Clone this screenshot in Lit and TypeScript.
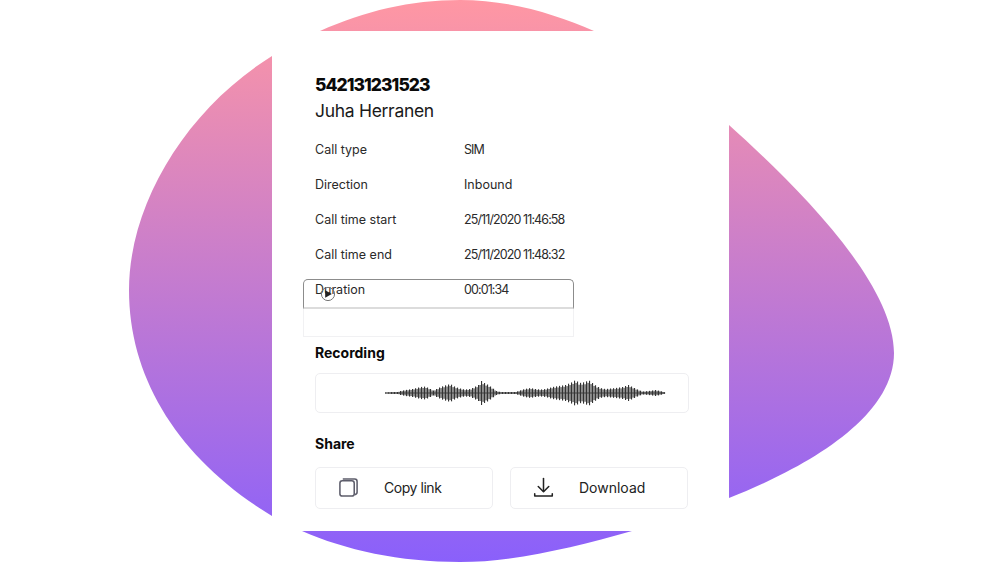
import { LitElement, html, css, svg } from "lit";
import { customElement } from "lit/decorators.js";

const ENV: [number, number][] = [
  [385,.5],[392,1],[397,1],[400,2],[405,3],[412,4],[420,6],[425,6.5],[430,4],[433,2.5],[436,4],[440,6],[446,8],[450,9],[453,7],[458,5],[464,3.5],[470,4],[474,6],[478,8],[481,12],[484,10],[488,8],[492,5],[496,2],[500,1],[515,1],[518,2],[524,4],[530,5],[535,4],[540,3.5],[545,4],[552,6],[558,7],[565,8],[572,11],[575,13],[579,10],[585,11],[588,13],[592,10],[596,7],[600,5],[605,4],[615,5],[622,6],[628,8],[632,6],[636,4],[642,1.5],[648,2],[655,3],[660,2],[665,.5],
];

function amp(x: number): number {
  for (let i = 1; i < ENV.length; i++) {
    const [x0, a0] = ENV[i - 1];
    const [x1, a1] = ENV[i];
    if (x <= x1) return a0 + ((a1 - a0) * (x - x0)) / (x1 - x0);
  }
  return 0.5;
}

const bars = () => {
  const out = [svg`<rect x="0" y="13.5" width="280" height="1" fill="#555"></rect>`];
  for (let x = 385; x <= 665; x += 1.5) {
    const a = amp(x) * (Math.round(x * 2) % 6 === 2 ? 1 : 0.8);
    out.push(svg`<rect x=${x - 385} y=${14 - a} width="1.1" height=${2 * a} fill="#333"></rect>`);
  }
  return out;
};

const ROWS: [string, string, string][] = [
  ["Call type", "SIM", "sim"],
  ["Direction", "Inbound", ""],
  ["Call time start", "25/11/2020 11:46:58", "num"],
  ["Call time end", "25/11/2020 11:48:32", "num"],
  ["Duration", "00:01:34", "num"],
];

@customElement("app-root")
export class AppRoot extends LitElement {
  static styles = css`
    :host {
      display: block;
      width: 1000px;
      height: 562px;
      font-family: Inter, "Liberation Sans", sans-serif;
      color: #1a1a1a;
      background: #fff;
    }
    .stage {
      position: relative;
      width: 1000px;
      height: 562px;
      overflow: hidden;
      padding: 31px 0 0 272px;
      box-sizing: border-box;
    }
    .blob {
      position: absolute;
      left: 0;
      top: 0;
    }
    .card {
      position: relative;
      box-sizing: border-box;
      width: 457px;
      height: 500px;
      background: #fff;
      padding: 43px 41px 0 43px;
      display: flex;
      flex-direction: column;
    }
    .number {
      font-size: 17.5px;
      font-weight: 800;
      line-height: 22px;
      letter-spacing: -0.95px;
      color: #0a0a0a;
    }
    .name {
      font-size: 17.5px;
      line-height: 24px;
      margin-top: 3px;
      letter-spacing: -0.3px;
    }
    .rows {
      margin-top: 18px;
      display: flex;
      flex-direction: column;
    }
    .row {
      position: relative;
      display: grid;
      grid-template-columns: 149px 1fr;
      height: 35px;
      font-size: 12.5px;
      line-height: 18px;
      color: #2a2a2a;
    }
    .num {
      letter-spacing: -0.9px;
    }
    .sim {
      letter-spacing: -0.9px;
    }
    .player {
      position: absolute;
      left: -12px;
      top: -2px;
      width: 271px;
      height: 58px;
      box-sizing: border-box;
    }
    .player-top {
      box-sizing: border-box;
      height: 30px;
      border: 1px solid #8c8c8c;
      border-bottom: 2px solid #dcdcdc;
      border-radius: 5px 5px 0 0;
    }
    .player-bottom {
      box-sizing: border-box;
      height: 28px;
      border: 1px solid #f1f1f3;
      border-top: 0;
    }
    .play {
      position: absolute;
      left: 17px;
      top: 7px;
    }
    h2 {
      margin: 0;
      font-size: 14px;
      font-weight: 700;
      line-height: 18px;
      color: #0a0a0a;
    }
    .recording {
      margin-top: 28px;
    }
    .wave {
      margin-top: 11px;
      box-sizing: border-box;
      width: 374px;
      height: 40px;
      border: 1px solid #eeeef1;
      border-radius: 5px;
      padding: 5px 0 0 69px;
    }
    .wave svg {
      display: block;
    }
    .share {
      margin-top: 22px;
    }
    .actions {
      margin-top: 14px;
      display: flex;
      gap: 17px;
    }
    .btn {
      box-sizing: border-box;
      width: 179px;
      height: 42px;
      padding: 0 0 2px 23px;
      border: 1px solid #eeeef1;
      border-radius: 5px;
      display: flex;
      align-items: center;
      font-size: 14px;
      color: #222;
    }
    .btn svg {
      width: 21px;
      height: 21px;
      flex: none;
      margin-right: 25px;
      margin-left: -1px;
    }
    .copy {
      letter-spacing: -0.45px;
    }
  `;

  render() {
    return html`
      <div class="stage">
        <svg class="blob" width="1000" height="562" viewBox="0 0 1000 562">
          <defs>
            <linearGradient id="g" x1="0" y1="0" x2="0" y2="1">
              <stop offset="0" stop-color="#ff97a3"></stop>
              <stop offset="1" stop-color="#8a60fb"></stop>
            </linearGradient>
          </defs>
          <path
            fill="url(#g)"
            d="M460 0 C 510 0 555 14 594 31 C 640 52 685 85 729 125 C 790 180 894 280 894 353 C 894 420 800 470 729 498 C 700 510 665 522 632 531 C 575 547 515 562 460 562 C 400 562 345 550 302 531 C 292 527 282 522 272 516 C 180 460 129 380 129 290 C 129 205 185 110 272 56 C 288 46 304 38 320 31 C 365 11 410 0 460 0 Z"
          ></path>
        </svg>
        <div class="card">
          <div class="number">542131231523</div>
          <div class="name">Juha Herranen</div>
          <div class="rows">
            ${ROWS.map(
              ([k, v, c], i) => html`
                <div class="row">
                  <span>${k}</span><span class=${c}>${v}</span>
                  ${i === 4
                    ? html`<div class="player">
                        <div class="player-top"></div>
                        <div class="player-bottom"></div>
                        <svg class="play" width="16" height="16" viewBox="0 0 16 16">
                          <circle cx="8" cy="8" r="6.6" fill="none" stroke="#777" stroke-width="1"></circle>
                          <path d="M5.2 4.2 L11.8 8 L5.2 11.8 Z" fill="#222"></path>
                        </svg>
                      </div>`
                    : ""}
                </div>
              `
            )}
          </div>
          <h2 class="recording">Recording</h2>
          <div class="wave">
            <svg width="281" height="28" viewBox="0 0 281 28">${bars()}</svg>
          </div>
          <h2 class="share">Share</h2>
          <div class="actions">
            <div class="btn">
              <svg viewBox="0 0 22 22" fill="none" stroke="#5d5d6b" stroke-width="1.6">
                <rect x="2" y="4" width="15" height="16" rx="2.5"></rect>
                <path d="M5 2.2 H17.5 Q20 2.2 20 4.7 V16 Q20 18 17.5 18.6"></path>
              </svg>
              <span class="copy">Copy link</span>
            </div>
            <div class="btn">
              <svg viewBox="0 0 22 22" fill="none" stroke="#222" stroke-width="1.6" stroke-linecap="round" stroke-linejoin="round">
                <path d="M11 1.5 V15"></path>
                <path d="M5.5 10 L11 15.5 L16.5 10"></path>
                <path d="M1.8 17.5 V20 H20.2 V17.5"></path>
              </svg>
              Download
            </div>
          </div>
        </div>
      </div>
    `;
  }
}
